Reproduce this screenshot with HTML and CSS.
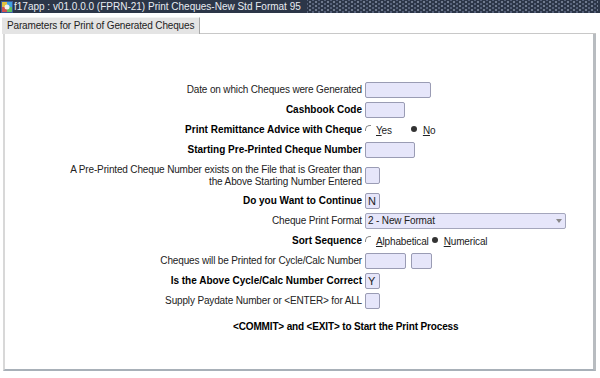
FILE: index.html
```html
<!DOCTYPE html>
<html lang="en">
<head>
    <meta charset="UTF-8">
    <title>f17app</title>
    <link rel="stylesheet" href="styles.css">
</head>
<body>

<!-- Title Bar -->
<div class="titlebar">
    <svg class="app-icon" width="12" height="12" viewBox="0 0 12 12">
        <rect x="0" y="0" width="12" height="12" fill="#3a5a9a"/>
        <rect x="1" y="1" width="5" height="5" fill="#e0c040"/>
        <rect x="6" y="1" width="5" height="5" fill="#40a0e0"/>
        <rect x="1" y="6" width="5" height="5" fill="#d05050"/>
        <rect x="6" y="6" width="5" height="5" fill="#60c060"/>
        <circle cx="6" cy="6" r="2.5" fill="#f0f0f0"/>
    </svg>
    <span class="title-text">f17app : v01.0.0.0 (FPRN-21) Print Cheques-New Std Format 95</span>
    <div class="title-fill"></div>
</div>

<!-- Tabs -->
<div class="tabs">
    <div class="tab">Parameters for Print of Generated Cheques</div>
    <div class="tab-rest"></div>
</div>

<!-- Main Panel -->
<div class="panel">
    <div class="form">
        <div class="row">
            <div class="label">Date on which Cheques were Generated</div>
            <div class="field"><span class="box w65"></span></div>
        </div>
        <div class="row">
            <div class="label bold">Cashbook Code</div>
            <div class="field"><span class="box w38"></span></div>
        </div>
        <div class="row">
            <div class="label bold">Print Remittance Advice with Cheque</div>
            <div class="field">
                <span class="radio"></span><span class="opt opt-yes"><u>Y</u>es</span>
                <span class="radio on"></span><span class="opt"><u>N</u>o</span>
            </div>
        </div>
        <div class="row">
            <div class="label bold">Starting Pre-Printed Cheque Number</div>
            <div class="field"><span class="box w49"></span></div>
        </div>
        <div class="row tall">
            <div class="label">A Pre-Printed Cheque Number exists on the File that is Greater than<br>the Above Starting Number Entered</div>
            <div class="field"><span class="box sq"></span></div>
        </div>
        <div class="row">
            <div class="label bold">Do you Want to Continue</div>
            <div class="field"><span class="box w14">N</span></div>
        </div>
        <div class="row">
            <div class="label">Cheque Print Format</div>
            <div class="field">
                <span class="box select">2 - New Format<span class="arrow"></span></span>
            </div>
        </div>
        <div class="row">
            <div class="label bold">Sort Sequence</div>
            <div class="field">
                <span class="radio"></span><span class="opt opt-alpha"><u>A</u>lphabetical</span>
                <span class="radio on"></span><span class="opt"><u>N</u>umerical</span>
            </div>
        </div>
        <div class="row">
            <div class="label">Cheques will be Printed for Cycle/Calc Number</div>
            <div class="field"><span class="box w39"></span><span class="box w20"></span></div>
        </div>
        <div class="row">
            <div class="label bold">Is the Above Cycle/Calc Number Correct</div>
            <div class="field"><span class="box w14">Y</span></div>
        </div>
        <div class="row">
            <div class="label">Supply Paydate Number or &lt;ENTER&gt; for ALL</div>
            <div class="field"><span class="box w14"></span></div>
        </div>
        <div class="note">&lt;COMMIT&gt; and &lt;EXIT&gt; to Start the Print Process</div>
    </div>
</div>

</body>
</html>
```

FILE: styles.css
```css
body {
    margin: 0;
    padding: 0;
    width: 600px;
    height: 378px;
    background: #fff;
    font-family: 'Liberation Sans', Arial, sans-serif;
    font-size: 10px;
    letter-spacing: -0.15px;
    color: #000;
    overflow: hidden;
}

/* Title Bar */
.titlebar {
    display: flex;
    align-items: center;
    height: 13px;
    background-color: #2c3648;
    color: #e8ecf2;
}

.app-icon {
    margin: 0 1px 0 1px;
    flex: none;
}

.title-text {
    font-size: 10px;
    white-space: nowrap;
    letter-spacing: 0;
}

.title-fill {
    flex: 1;
    height: 13px;
    margin: 0 2px 0 6px;
    background-color: #2c3648;
    background-image:
        radial-gradient(circle, #6f7a8e 0.8px, transparent 1px),
        radial-gradient(circle, #56617a 0.8px, transparent 1px);
    background-size: 6px 4px, 6px 4px;
    background-position: 0 0, 3px 2px;
}

/* Tabs */
.tabs {
    display: flex;
    align-items: flex-end;
    margin-top: 4px;
    padding-left: 2px;
    padding-right: 4px;
}

.tab {
    height: 16px;
    line-height: 16px;
    padding: 0 5px 0 5px;
    background-color: #e4e4e4;
    border-top: 1px solid #f4f4f4;
    border-right: 1px solid #a8a8a8;
    color: #222;
}

.tab-rest {
    flex: 1;
    border-bottom: 1px solid #c8c8c8;
}

/* Main Panel */
.panel {
    height: 337px;
    margin: 0 4px 0 3px;
    border-left: 2px solid #d8d8d8;
    border-right: 3px solid #b8bcc0;
    border-bottom: 2px solid #a8b0b8;
    box-sizing: border-box;
}

.form {
    padding-top: 46px;
}

.row {
    display: flex;
    align-items: center;
    height: 20px;
}

.row.tall {
    height: 31px;
}

.label {
    width: 357px;
    text-align: right;
    line-height: 12px;
    color: #222;
    flex: none;
}

.bold {
    font-weight: bold;
    letter-spacing: 0;
    color: #000;
}

.field {
    display: flex;
    align-items: center;
    padding-left: 3px;
    height: 20px;
}

.box {
    display: inline-block;
    height: 14px;
    line-height: 14px;
    margin-right: 5px;
    background-color: #e6e6fa;
    border: 1px solid #9a9cb4;
    border-radius: 2px;
    padding-left: 2px;
    box-sizing: content-box;
    color: #222;
    font-size: 11px;
}

.w65 { width: 62px; }
.w38 { width: 36px; }
.w49 { width: 46px; }
.w39 { width: 37px; }
.w20 { width: 17px; }
.w14 { width: 11px; }

.sq {
    width: 11px;
    height: 15px;
}

.select {
    position: relative;
    width: 197px;
    font-size: 10px;
    border-color: #a4a6bc;
}

.arrow {
    position: absolute;
    right: 3px;
    top: 5px;
    width: 0;
    height: 0;
    border-left: 3px solid transparent;
    border-right: 3px solid transparent;
    border-top: 4px solid #888;
}

.radio {
    display: inline-block;
    width: 5px;
    height: 5px;
    margin: 0 5px 4px 0;
    border-top: 1px solid #888;
    border-left: 1px solid #888;
    border-radius: 5px 0 0 0;
}

.radio.on {
    border: none;
    width: 6px;
    height: 6px;
    border-radius: 50%;
    background: #333;
    margin: 0 6px 2px 0;
}

.opt {
    color: #222;
}

.opt-yes {
    margin-right: 19px;
}

.opt-alpha {
    margin-right: 3px;
}

.note {
    margin-top: 10px;
    padding-left: 228px;
    font-weight: bold;
}
```
